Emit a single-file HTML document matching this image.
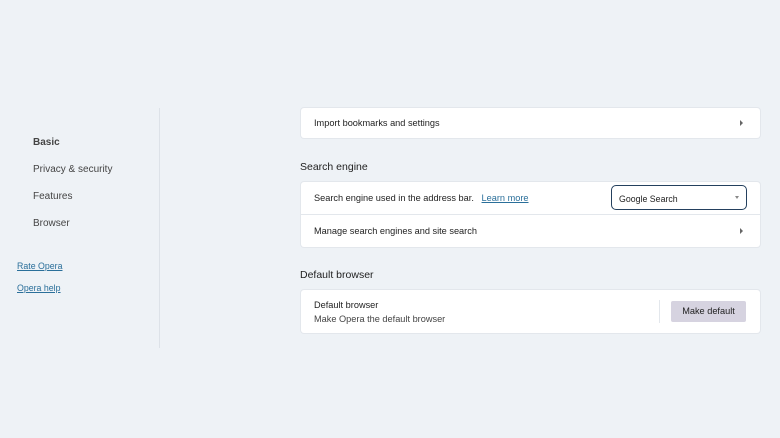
<!DOCTYPE html><html><head><style>
body{margin:0;width:780px;height:438px;background:#eef2f6;font-family:"Liberation Sans",sans-serif;position:relative;overflow:hidden;color:#222}
.a{position:absolute}
.nav{font-size:10px;color:#444;left:33px}
.lnk{font-size:8.8px;color:#2a6f9a;text-decoration:underline;left:17px}
.card{position:absolute;left:301px;width:459px;background:#fff;border-radius:3px;box-shadow:0 0 0 1px #e3e7ec}
.t{font-size:9.2px;color:#222;position:absolute}
.h{font-size:10.5px;color:#222;left:300px}
.arr{position:absolute;width:0;height:0;border-left:3px solid #666;border-top:3px solid transparent;border-bottom:3px solid transparent}
</style></head><body>
<div class="a" style="left:159px;top:108px;width:1px;height:240px;background:#dde2e8"></div>
<div class="a nav" style="top:137px;font-weight:bold">Basic</div>
<div class="a nav" style="top:164px">Privacy &amp; security</div>
<div class="a nav" style="top:191px">Features</div>
<div class="a nav" style="top:218px">Browser</div>
<div class="a lnk" style="top:261px">Rate Opera</div>
<div class="a lnk" style="top:283px">Opera help</div>

<div class="card" style="top:108px;height:30px">
<div class="t" style="left:13px;top:10px">Import bookmarks and settings</div>
<div class="arr" style="left:439px;top:12px"></div></div>

<div class="a h" style="top:161px">Search engine</div>
<div class="card" style="top:182px;height:65px">
<div class="t" style="left:13px;top:11px">Search engine used in the address bar.&nbsp;&nbsp;&nbsp;<span style="color:#2a6f9a;text-decoration:underline">Learn more</span></div>
<div style="position:absolute;left:310px;top:3px;width:136px;height:25px;border:1.5px solid #24405e;border-radius:5px;box-sizing:border-box"><div class="t" style="left:7px;top:8px;font-size:8.8px">Google Search</div><div style="position:absolute;right:7px;top:10px;border-top:3px solid #888;border-left:2.5px solid transparent;border-right:2.5px solid transparent"></div></div>
<div style="position:absolute;left:0;right:0;top:32px;height:1px;background:#e3e7ec"></div>
<div class="t" style="left:13px;top:44px">Manage search engines and site search</div>
<div class="arr" style="left:439px;top:46px"></div></div>

<div class="a h" style="top:269px">Default browser</div>
<div class="card" style="top:290px;height:43px">
<div class="t" style="left:13px;top:10px">Default browser</div>
<div class="t" style="left:13px;top:24px;color:#444">Make Opera the default browser</div>
<div style="position:absolute;left:358px;top:10px;width:1px;height:23px;background:#e3e7ec"></div>
<div style="position:absolute;left:370px;top:11px;width:75px;height:21px;background:#d6d3e0;border-radius:2px;font-size:9.2px;text-align:center;line-height:21px;color:#222">Make default</div>
</div>
</body></html>
